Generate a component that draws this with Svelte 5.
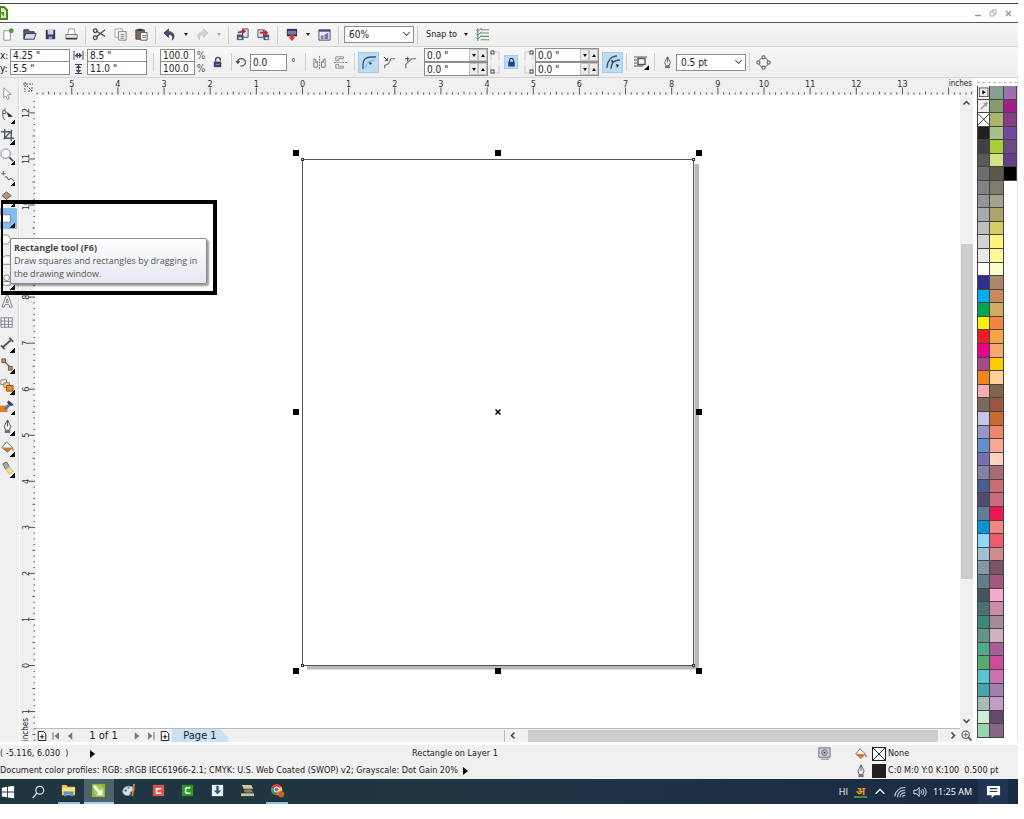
<script>
const INCH = 46.15
const VINCH = 46.05

let x = $state('4.25 "')
let y = $state('5.5 "')
let w = $state('8.5 "')
let h = $state('11.0 "')
let tool = $state('rect')

// ruler origin is the lower left corner of the page
const hTicks = []
for (let i = -46; i <= 116; i++) {
    hTicks.push({ pos: 267.5 + (i * INCH) / 8, i })
}
const vTicks = []
for (let i = -13; i <= 98; i++) {
    vTicks.push({ pos: 570.5 - (i * VINCH) / 8, i })
}
const tickLen = (i) => (i % 8 === 0 ? 7 : i % 4 === 0 ? 3 : 2)

const colors1 = '#231f20 #414042 #58595b #6d6e71 #808285 #939598 #a7a9ac #bcbec0 #d1d3d4 #e6e7e8 #ffffff #2e3192 #00aeef #00a651 #fff200 #ed1c24 #ec008c #a54a8c #f58220 #f7adaf #7c6a60 #c7c5e6 #9a95cb #6690cb #7470b3 #8480a8 #485f8f #504c70 #607d9b #0095da #8ed8f8 #a4bfd3 #8299aa #657d8a #47545e #4a7370 #3a8a78 #649488 #50a890 #56aa6c #58c5cf #46a5b0 #a6beb0 #cdebd5 #97d5ac'.split(' ')
const colors2 = '#859f93 #879a73 #a8b868 #a8c08a #a6ce39 #d4e388 #5b584a #7e7d6b #a3a48a #aca56a #d7cc68 #fff47a #fff79a #fffbce #a9876a #c98b5e #d0ab66 #f68345 #f7a446 #f9a771 #fecb00 #fdd09a #7d664c #9c563f #c96a33 #f1876a #f8a790 #fdd3c0 #a66c70 #cb6c70 #ca6a80 #ed1651 #f58580 #f0586f #cf8b8e #7c5268 #a4567f #f6aace #cd8bab #a38a9c #cfb0c2 #a75d96 #cc4b9b #c874ae #a081ab #c49acb #65496c #876589'.split(' ')
const colors3 = '#9e70b0 #a11f88 #893b88 #7548a0 #6c4a86 #673d8c #000000'.split(' ')

const icons = {
    new: '<path d="M3 4h6l1 2v8H3z" fill="#fff" stroke="#8a8f98"/><circle cx="11" cy="4" r="2.6" fill="#4b9a3c"/>',
    open: '<path d="M2 13V3h5l1 2h5v2" fill="#5a5f7d" stroke="#2e3154"/><path d="M2 13l2-6h11l-2 6z" fill="#d9dceb" stroke="#2e3154"/>',
    save: '<path d="M3 3h10v10H3z" fill="#34375f"/><path d="M5 3h6v5H5z" fill="#cfd3ea"/><path d="M6 10h4v3H6z" fill="#9aa0c4"/>',
    print: '<path d="M4 8l1-6h6l1 6" fill="#fff" stroke="#999"/><path d="M2 8h12v4H2z" fill="#e4e4e4" stroke="#777"/><path d="M2 12.5h12" stroke="#333" stroke-width="1.6"/>',
    cut: '<path d="M4 4l10 6M4 11l10-8" stroke="#555" stroke-width="1.5"/><circle cx="3.5" cy="4" r="2" fill="none" stroke="#444" stroke-width="1.3"/><circle cx="3.5" cy="11.5" r="2" fill="none" stroke="#444" stroke-width="1.3"/>',
    copy: '<path d="M2 2h8v9H2z" fill="#f4f4f4" stroke="#aaa"/><path d="M6 5h8v9H6z" fill="#fff" stroke="#777"/><path d="M8 8h4M8 10h4M8 12h4" stroke="#777"/>',
    paste: '<path d="M2 3h9v10H2z" fill="#7c6c58" stroke="#4f473e"/><path d="M4 2h5v2H4z" fill="#333"/><path d="M7 6h7v8H7z" fill="#fff" stroke="#555"/><path d="M9 9h4M9 11h4" stroke="#666"/>',
    undo: '<path d="M7 2L2 6.500 7 11V8c4 0 5 2 4 6 4-5 1-9-4-9z" fill="#454a66" stroke="#454a66"/>',
    redo: '<path d="M9 2l5 4.500L9 11V8c-4 0-5 2-4 6-4-5-1-9 4-9z" fill="#d2d2d2" stroke="#c4c4c4"/>',
    import: '<path d="M8 2h6v9H8z" fill="#dfe3f1" stroke="#4a4f75"/><path d="M2 8h7v6H2z" fill="#4d5178"/><path d="M4 11h3v2H4z" fill="#eee"/><path d="M3 6l6-1.500" stroke="#c0272d" stroke-width="2"/><path d="M8 1.500l4 3-4 3z" fill="#c0272d"/>',
    export: '<path d="M2 3h6v8H2z" fill="#dfe3f1" stroke="#4a4f75"/><path d="M8 8h6v6H8z" fill="#4d5178"/><path d="M10 11h3v2h-3z" fill="#eee"/><path d="M4 6h6" stroke="#c0272d" stroke-width="2"/><path d="M9 2l4 4-4 4z" fill="#c0272d"/>',
    launch: '<path d="M3 2h11v8H3z" fill="#30335c"/><path d="M4 4h9v4H4z" fill="#777ba3"/><path d="M7 8h3v3h2l-3.500 4L5 11h2z" fill="#d8342b"/>',
    welcome: '<path d="M2 3h12v11H2z" fill="#e9ecf7" stroke="#474c74"/><path d="M2 3h12v2H2z" fill="#474c74"/><path d="M4 9h3v4H4zM8 8l4-2v7H8z" fill="#747aa5"/>',
    options: '<path d="M6 3h9M6 6.500h9M6 10h9M6 13.500h9" stroke="#64946a" stroke-width="1.100"/><path d="M3 1v14M1 3l2 2 4-4M1 7l2 2 4-4M1 11l2 2 4-4" fill="none" stroke="#4c8558"/>',
    lock: '<path d="M6 7V5a2.500 2.500 0 0 1 5 0v1" fill="none" stroke="#3d4270" stroke-width="1.500"/><path d="M4 7h8v6H4z" fill="#3d4270"/><path d="M6 10h4" stroke="#8f94b8"/>',
    locked: '<path d="M5.500 8V5.500a2.500 2.500 0 0 1 5 0V8" fill="none" stroke="#27417a" stroke-width="1.500"/><path d="M4 7h8v6H4z" fill="#27417a"/>',
    rotate: '<path d="M3 7a5 4.500 0 1 1 3.500 5" fill="none" stroke="#484c66" stroke-width="1.500"/><path d="M0.500 6h6l-3 4z" fill="#484c66"/>',
    mirrorH: '<path d="M2 13V4l2 1v3l2-1v6zM14 13V4l-2 1v3l-2-1v6z" fill="none" stroke="#74757d"/><path d="M8 1v14" stroke="#74757d" stroke-dasharray="2 1"/>',
    mirrorV: '<path d="M3 2h8v2H6v2H3zM3 14h8v-2H6v-2H3z" fill="none" stroke="#85868d"/><path d="M1 8h14" stroke="#74757d" stroke-dasharray="2 1"/>',
    round: '<path d="M2 15V11C2 6 5 3 10 3h5" fill="none" stroke="#3c5573" stroke-width="1.300"/><path d="M5 14c0-5 3-8 9-8" fill="none" stroke="#8aa9c7"/><path d="M8 8l3 1-2 2z" fill="#222"/>',
    scallop: '<path d="M3 14v-3c3 0 6-3 6-7h5" fill="none" stroke="#6a6c78" stroke-width="1.200"/><path d="M2 2l4 4M3 6h3V3" stroke="#444" fill="none"/>',
    chamfer: '<path d="M3 14v-4l6-6h5" fill="none" stroke="#6a6c78" stroke-width="1.200"/><path d="M2 4h5M5 2v5" stroke="#444" fill="none"/>',
    relative: '<path d="M2 14C2 7 6 2 12 2M6 15c0-6 3-9 9-9" fill="none" stroke="#3c5573" stroke-width="1.300"/><path d="M6 6l3 1-2 2zM11 10l3 1-2 3z" fill="#222"/>',
    wrap: '<path d="M1 3h13M1 6h3M1 9h3M1 12h9" stroke="#555"/><path d="M5 4.500h7v6H5z" fill="#fff" stroke="#555" stroke-width="1.400"/><path d="M16 11v5h-5z" fill="#000"/>',
    pen: '<path d="M8 1l3.500 7-1.500 4H6L4.500 8z" fill="#eee" stroke="#50525d"/><path d="M8 2v6" stroke="#50525d"/><path d="M5 12h6v3H5z" fill="#6f7385"/>',
    convert: '<circle cx="8" cy="8" r="5" fill="none" stroke="#555"/><path d="M6.500 1h3v3h-3zM6.500 12h3v3h-3zM1 6.500h3v3H1zM12 6.500h3v3h-3z" fill="#fff" stroke="#555"/>',
    pick: '<path d="M4 2l8 7-4 .5 2 4-2 1-2-4-2 2z" fill="#fff" stroke="#8c8c96"/>',
    shape: '<path d="M6 1C2 5 2 9 5 14" fill="none" stroke="#555"/><path d="M3 4h3v3H3z" fill="#fff" stroke="#555"/><path d="M7 5l7 5-5 1z" fill="#333"/>',
    crop: '<path d="M5 1v10h10M1 4h11v10M13 2L4 12" fill="none" stroke="#555a68" stroke-width="1.500"/>',
    zoom: '<circle cx="6" cy="6" r="5" fill="#f5f8fc" stroke="#999ca8" stroke-width="1.300"/><path d="M10 10l4 4" stroke="#555" stroke-width="2"/>',
    freehand: '<path d="M1 5h5M3.500 2v5M5 9c3-3 3 4 5 2s2-1 5 2" fill="none" stroke="#666a78" stroke-width="1.100"/>',
    smart: '<path d="M2 6l5-4 5 4-5 4z" fill="#b29674" stroke="#765f4c"/><path d="M8 11h6v3H8z" fill="#b29674"/>',
    rect: '<path d="M-1 4h12v8H-1z" fill="#fff" stroke="#7a8899"/>',
    ellipse: '<circle cx="6" cy="8" r="5" fill="#fff" stroke="#888"/>',
    poly: '<path d="M2 5l4-2h5v9H2z" fill="#fff" stroke="#888"/>',
    basic: '<circle cx="7" cy="5" r="3" fill="#fff" stroke="#777"/><path d="M3 9h8v4H3z" fill="#fff" stroke="#777"/>',
    text: '<path d="M2 14L6.500 2h2.500L13 14h-2.500L9.500 11H5.500l-1 3zM6.200 9h2.800L7.700 5z" fill="#fff" stroke="#777c88"/>',
    table: '<path d="M1 3h12v10H1zM5 3v10M9 3v10M1 6.500h12M1 10h12" fill="#fff" stroke="#777c8c"/>',
    dim: '<path d="M3 12L12 4" stroke="#555" stroke-width="2"/><path d="M1 10l4 4M10 2l4 4" stroke="#555" stroke-width="2"/>',
    connector: '<path d="M2 2h4v4H2zM9 10h4v4H9z" fill="#c88e64" stroke="#74533f"/><path d="M5 5l6 6" stroke="#8d624d" stroke-width="1.500"/>',
    blend: '<path d="M1 2h6v5H1z" fill="#fff" stroke="#777"/><path d="M4 5h6v5H4z" fill="#f9c77f" stroke="#a87a38"/><path d="M7 8h7v6H7z" fill="#f18a21" stroke="#8b5019"/>',
    eye: '<path d="M0 7h8v7H0z" fill="#e57e22"/><path d="M5 11l6-6" stroke="#60769b" stroke-width="3"/><path d="M9 2l5 4-2 1-4-3z" fill="#303b5d" stroke="#303b5d"/>',
    fill: '<path d="M2 8l5-6 6 6-5 5z" fill="#fff" stroke="#575b69"/><path d="M3 8h10l-5 5z" fill="#d8771f"/><path d="M13 8c3 2 1 5 0 3" fill="#bd631c"/>',
    interactive: '<path d="M3 3l4-2 3 5-4 3z" fill="#aaa" stroke="#646871"/><path d="M6 9l4-3 4 5-4 3z" fill="#f1dc8d" stroke="#cbb56d"/>',
    addPage: '<path d="M3 2h7l3 3v9H3z" fill="#fff" stroke="#222" stroke-width="1.300"/><path d="M5 9h6M8 6v6" stroke="#222" stroke-width="1.400"/>',
    first: '<path d="M4 3v10" stroke="#777" stroke-width="1.500"/><path d="M12 3v10L6 8z" fill="#777"/>',
    prev: '<path d="M11 3v10L5 8z" fill="#777"/>',
    next: '<path d="M5 3v10l6-5z" fill="#777"/>',
    last: '<path d="M12 3v10" stroke="#777" stroke-width="1.500"/><path d="M4 3v10l6-5z" fill="#777"/>',
    nav: '<circle cx="7" cy="7" r="4.500" fill="#eee" stroke="#555" stroke-width="1.300"/><path d="M4.500 7h5M7 4.500v5" stroke="#555"/><path d="M10 10l4 4" stroke="#555" stroke-width="2"/>',
    proof: '<path d="M2 2h12v10H2z" fill="#cbd0e2" stroke="#666b89"/><circle cx="8" cy="7" r="3" fill="#e9b6b2" stroke="#555a78"/><circle cx="8" cy="7" r="1" fill="#333"/><path d="M4 14h9" stroke="#777"/>',
    windows: '<path d="M1 3l6-1v5.500H1zM8 1.800L15 1v6.500H8zM1 8.500h6V14l-6-1zM8 8.500h7V15l-7-.8z" fill="#fff"/>',
    search: '<circle cx="10" cy="6" r="4.500" fill="none" stroke="#e6edf0" stroke-width="1.300"/><path d="M7 9l-5 6" stroke="#e6edf0" stroke-width="1.500"/>',
    folder: '<path d="M1 2h5l1 2h8v9H1z" fill="#f2c14c"/><path d="M1 5h14v4H1z" fill="#fbe08f"/><path d="M3 14V9h10v5h-3v-2H6v2z" fill="#5197c8"/>',
    corel: '<path d="M1 1h14v14H1z" fill="#8ab53d"/><path d="M3 2h7l4 4v8H6l-3-3z" fill="#a9cf5b"/><path d="M3 3l6 7" stroke="#fff" stroke-width="2.500"/><path d="M12 6v7H6z" fill="#fff"/>',
    paint: '<path d="M2 8c1-6 11-6 12-1 0 3-5 1-4 4 0 4-9 3-8-3z" fill="#d7dfe5" stroke="#8fa7b5"/><circle cx="5" cy="8" r="1.300" fill="#2d80b8"/><circle cx="8" cy="5" r="1.200" fill="#4ba557"/><path d="M14 1l-2 13" stroke="#c9853e" stroke-width="2"/>',
    camRed: '<path d="M2 2h12v12H2z" fill="#e4524c"/><path d="M11 6H6v5h5" fill="none" stroke="#fff" stroke-width="1.600"/>',
    camGreen: '<path d="M2 2h12v12H2z" fill="#2c9b22"/><path d="M11 5H7L6 6v4l1 1h4" fill="none" stroke="#fff" stroke-width="1.600"/>',
    download: '<path d="M2 2h12v12H2z" fill="#e9f1f8"/><path d="M8 3v6" stroke="#29557f" stroke-width="2.500"/><path d="M4 8h8l-4 4z" fill="#29557f"/>',
    scanner: '<path d="M2 2h10l2 4H4z" fill="#d6c995"/><path d="M4 7h8l2 3H5z" fill="#8d8362"/><path d="M1 11h14v3H1z" fill="#c8bf9e"/>',
    chrome: '<circle cx="7" cy="7" r="6" fill="#e34133"/><path d="M2 4l5 9A6 6 0 0 1 2 4z" fill="#2da44e"/><path d="M12.500 4.500H7l3 4-3 4.500a6 6 0 0 0 5.500-8.500z" fill="#f8c62d"/><circle cx="7" cy="7" r="2.600" fill="#4285f4" stroke="#fff"/><circle cx="12" cy="12" r="3.300" fill="#c75b35"/>',
    up: '<path d="M3 10l5-5 5 5" fill="none" stroke="#fff" stroke-width="1.400"/>',
    wifi: '<path d="M2 13A11 11 0 0 1 14 3M5 14a8 8 0 0 1 9-8M8 14a5 5 0 0 1 6-5M11 14a2 2 0 0 1 3-2" fill="none" stroke="#cbd2dc" stroke-width="1.200"/>',
    sound: '<path d="M1 6h3l3-3v10l-3-3H1z" fill="none" stroke="#fff"/><path d="M9 6q2 2 0 4M11 4.500q3 3.500 0 7M13 3q4 5 0 10" fill="none" stroke="#dbe2ea" stroke-width="1.100"/>',
    note: '<path d="M1 2h14v10H9l-3 3v-3H1z" fill="#fff"/><path d="M4 5h8M4 8h8" stroke="#263756" stroke-width="1.300"/>',
}

const tools = ['pick', 'shape', 'crop', 'zoom', 'freehand', 'smart', 'rect', 'ellipse', 'poly', 'basic', 'text', 'table', 'dim', 'connector', 'blend', 'eye', 'pen', 'fill', 'interactive']
const noFlyout = ['pick', 'ellipse', 'poly', 'text', 'table']
const apps = ['folder', 'corel', 'paint', 'camRed', 'camGreen', 'download', 'scanner', 'chrome']
const handles = [[261, 58], [463, 58], [664, 58], [261, 317], [664, 317], [261, 576], [463, 576], [664, 576]]
</script>

{#snippet icon(name, size = 15)}
    <svg class="icon" width={size} height={size} viewBox="0 0 16 16" aria-hidden="true">{@html icons[name]}</svg>
{/snippet}

{#snippet btn(name)}
    <button class="tb" aria-label={name}>{@render icon(name)}</button>
{/snippet}

{#snippet caret(off)}
    <button class="caret" class:off aria-label="More"><i></i></button>
{/snippet}

{#snippet corners(right)}
    <div class="corners">
        {#each [0, 1] as n}
            <svg width="10" height="11" viewBox="0 0 10 11">
                <path d={n ? 'M1 1v8h8V1' : 'M1 10V2h8v8'} fill="none" stroke="#c9c9c9" />
                <rect x={right ? 6 : 1} y={n ? 6 : 1} width="3" height="3" fill="#fff" stroke="#444" />
            </svg>
        {/each}
    </div>
{/snippet}

{#snippet spinPair(name)}
    <div class="pair spin">
        {#each ['top', 'bottom'] as row}
            <div class="spinrow">
                <input aria-label="{name} {row}" value={'0.0 "'} />
                <button aria-label="Decrease"><i></i></button>
                <button aria-label="Increase"><i class="upward"></i></button>
            </div>
        {/each}
    </div>
{/snippet}

<div class="app">
    <header class="title">
        <svg width="8" height="14" viewBox="0 0 8 14"><path d="M0 1h4l3 3v9H0z" fill="#dcebbb" stroke="#4d8522" stroke-width="2" /><path d="M0 6l4 5V6z" fill="#5b952c" /></svg>
        <div class="winbtns">
            <button aria-label="Minimize"><svg width="9" height="9"><path d="M1 6.500h6" stroke="#999" stroke-width="1.500" /></svg></button>
            <button aria-label="Restore"><svg width="9" height="9"><path d="M1 3h4v4H1zM3 3V1h4v4H5" fill="none" stroke="#aaa" /></svg></button>
            <button aria-label="Close"><svg width="9" height="9"><path d="M2 2l5 5M7 2L2 7" stroke="#999" stroke-width="1.500" /></svg></button>
        </div>
    </header>

    <div class="bar standard">
        {@render btn('new')}{@render btn('open')}{@render btn('save')}{@render btn('print')}
        <span class="sep"></span>
        {@render btn('cut')}{@render btn('copy')}{@render btn('paste')}
        <span class="sep"></span>
        {@render btn('undo')}{@render caret()}{@render btn('redo')}{@render caret(true)}
        <span class="sep"></span>
        {@render btn('import')}{@render btn('export')}
        <span class="sep"></span>
        {@render btn('launch')}{@render caret()}{@render btn('welcome')}
        <span class="sep wide"></span>
        <div class="combo"><select aria-label="Zoom level"><option>60%</option></select></div>
        <span class="sep wide"></span>
        <button class="snap">Snap to</button>{@render caret()}
        {@render btn('options')}
    </div>

    <div class="bar property">
        <div class="labels"><label for="px">x:</label><label for="py">y:</label></div>
        <div class="pair pos"><input id="px" bind:value={x} /><input id="py" bind:value={y} /></div>
        <div class="sizes">
            <svg width="11" height="9"><path d="M1 0v9M10 0v9M2 4.500h7" stroke="#444862" /><path d="M2 4.500l3-3v6zM9 4.500l-3-3v6z" fill="#444862" /></svg>
            <svg width="11" height="10"><path d="M2 .5h7M2 9.500h7M5.500 1v8" stroke="#444862" /><path d="M5.500 1l3 3h-6zM5.500 9l3-3h-6z" fill="#444862" /></svg>
        </div>
        <div class="pair pos"><input aria-label="Width" bind:value={w} /><input aria-label="Height" bind:value={h} /></div>
        <span class="sep wide"></span>
        <div class="pair scale"><input aria-label="Scale X" value="100.0" /><input aria-label="Scale Y" value="100.0" /></div>
        <div class="labels pct"><span>%</span><span>%</span></div>
        {@render btn('lock')}
        <span class="sep"></span>
        {@render icon('rotate', 13)}
        <input class="angle" aria-label="Angle of rotation" value="0.0" />
        <span class="deg">°</span>
        <span class="sep"></span>
        {@render btn('mirrorH')}{@render btn('mirrorV')}
        <span class="sep"></span>
        <button class="tb on" aria-label="Round corner">{@render icon('round', 16)}</button>
        {@render btn('scallop')}{@render btn('chamfer')}
        {@render spinPair('Left corner radius')}
        {@render corners(false)}
        <button class="tb small on" aria-label="Edit corners together">{@render icon('locked', 13)}</button>
        {@render corners(true)}
        {@render spinPair('Right corner radius')}
        <button class="tb on gap" aria-label="Relative corner scaling">{@render icon('relative', 16)}</button>
        <span class="sep"></span>
        <button class="tb" aria-label="Wrap text">{@render icon('wrap', 16)}</button>
        <span class="sep"></span>
        <span class="nib">{@render icon('pen', 13)}</span>
        <div class="combo"><select aria-label="Outline width"><option>0.5 pt</option></select></div>
        <span class="sep"></span>
        {@render btn('convert')}
    </div>

    <main>
        <nav class="toolbox" aria-label="Toolbox">
            {#each tools as t}
                <button class:active={tool === t} aria-label={t} onclick={() => (tool = t)}>
                    {@render icon(t)}
                    {#if !noFlyout.includes(t)}<i></i>{/if}
                </button>
            {/each}
        </nav>

        <div class="origin">
            <svg width="10" height="10"><path d="M2 0v10M0 2h10M4 4l5 5M9 5v4H5" fill="none" stroke="#555" stroke-dasharray="2 1" /></svg>
        </div>
        <div class="hruler">
            <svg width="100%" height="17">
                {#each hTicks as t}
                    <path d="M{t.pos} {16.5 - tickLen(t.i)}V16.500" stroke="#555" />
                    {#if t.i % 8 === 0 && t.i < 112}<text x={t.pos} y="9" text-anchor="middle">{Math.abs(t.i / 8)}</text>{/if}
                {/each}
            </svg>
            <span class="unit">inches</span>
        </div>
        <div class="vruler">
            <svg width="16" height="100%">
                {#each vTicks as t}
                    <path d="M{15.5 - tickLen(t.i)} {t.pos}H15.500" stroke="#555" />
                    {#if t.i % 8 === 0}<text transform="translate(9 {t.pos}) rotate(-90)" text-anchor="middle">{Math.abs(t.i / 8)}</text>{/if}
                {/each}
            </svg>
            <span class="unit">inches</span>
        </div>

        <div class="canvas">
            <svg width="100%" height="100%">
                <path d="M659.500 69H664V574.500H272V571H659.500z" fill="#b9b9b9" />
                <rect x="267.500" y="64.500" width="391" height="506" fill="#fff" stroke="#555" />
                {#each [[267, 64], [658, 64], [267, 570], [658, 570]] as [cx, cy]}
                    <rect x={cx - 0.5} y={cy - 0.5} width="2" height="2" fill="#fff" stroke="#333" />
                {/each}
                {#each handles as [hx, hy]}
                    <rect x={hx - 3} y={hy - 3} width="6" height="6" />
                {/each}
                <path d="M460.500 314.500l5 5M465.500 314.500l-5 5" stroke="#000" stroke-width="1.500" />
            </svg>
        </div>

        <div class="vscroll">
            <svg width="9" height="7"><path d="M1.500 5.500l3-3 3 3" fill="none" stroke="#444" stroke-width="1.500" /></svg>
            <div class="track"><div class="thumb"></div></div>
            <svg width="9" height="7"><path d="M1.500 1.500l3 3 3-3" fill="none" stroke="#444" stroke-width="1.500" /></svg>
        </div>

        <div class="pagebar">
            <button aria-label="Add page before">{@render icon('addPage', 12)}</button>
            <button aria-label="First page">{@render icon('first', 12)}</button>
            <button aria-label="Previous page">{@render icon('prev', 12)}</button>
            <span class="count">1 of 1</span>
            <button aria-label="Next page">{@render icon('next', 12)}</button>
            <button aria-label="Last page">{@render icon('last', 12)}</button>
            <button aria-label="Add page after">{@render icon('addPage', 12)}</button>
            <button class="tab">Page 1</button>
            <div class="hscroll">
                <svg width="7" height="9"><path d="M5.500 1.500l-3 3 3 3" fill="none" stroke="#444" stroke-width="1.500" /></svg>
                <div class="thumb"></div>
                <svg width="7" height="9"><path d="M1.500 1.500l3 3-3 3" fill="none" stroke="#444" stroke-width="1.500" /></svg>
            </div>
        </div>
        <button class="navigator" aria-label="Navigator">{@render icon('nav', 13)}</button>

        <aside class="palette">
            <div class="grip"></div>
            <div class="cols">
                <div class="col">
                    <button class="menu" aria-label="Palette menu"><svg width="100%" height="100%" viewBox="0 0 13 13"><rect x="1.500" y="1.500" width="10" height="10" fill="#eee" stroke="#444" /><path d="M5 4l4 2.500L5 9z" /></svg></button>
                    <button aria-label="Pick color" style="background: #eee"><svg width="100%" height="100%" viewBox="0 0 13 13"><path d="M3 10l5-5" stroke="#aaa" stroke-width="2" /><path d="M7 3l3 3M8 5l3-3" stroke="#999" stroke-width="2" /></svg></button>
                    <button aria-label="No color" style="background: #fff"><svg width="100%" height="100%" viewBox="0 0 13 13"><path d="M0 0l13 13M13 0L0 13" stroke="#222" /></svg></button>
                    {#each colors1 as c}<button aria-label={c} style="background: {c}"></button>{/each}
                </div>
                <div class="col">
                    {#each colors2 as c}<button aria-label={c} style="background: {c}"></button>{/each}
                </div>
                <div class="col">
                    {#each colors3 as c}<button aria-label={c} style="background: {c}"></button>{/each}
                </div>
            </div>
        </aside>

        <div class="callout">
            <div class="tooltip" role="tooltip">
                <strong>Rectangle tool (F6)</strong>
                <p>Draw squares and rectangles by dragging in the drawing window.</p>
            </div>
        </div>
    </main>

    <footer class="status">
        <div class="info">
            <div class="line">
                <span class="coords">( -5.116, 6.030&nbsp; )</span><i class="play"></i>
                <span class="object">Rectangle on Layer 1</span>
                {@render icon('proof')}
            </div>
            <div class="line">
                <span class="profiles">Document color profiles: RGB: sRGB IEC61966-2.1; CMYK: U.S. Web Coated (SWOP) v2; Grayscale: Dot Gain 20%</span><i class="play"></i>
            </div>
        </div>
        <div class="style">
            <div class="line">
                {@render icon('fill', 14)}
                <svg class="chip" width="14" height="14"><rect x=".5" y=".5" width="13" height="13" fill="#fff" stroke="#222" /><path d="M1 1l12 12M13 1L1 13" stroke="#222" /></svg>
                <span>None</span>
            </div>
            <div class="line">
                {@render icon('pen', 14)}
                <svg class="chip" width="14" height="14"><rect width="14" height="14" fill="#231f20" /></svg>
                <span>C:0 M:0 Y:0 K:100&nbsp; 0.500 pt</span>
            </div>
        </div>
    </footer>

    <div class="taskbar">
        <button class="sys" aria-label="Start">{@render icon('windows', 14)}</button>
        <button class="sys" aria-label="Search">{@render icon('search', 14)}</button>
        <div class="apps">
            {#each apps as a}
                <button class:current={a === 'corel'} class:open={a === 'folder' || a === 'chrome'} aria-label={a}>{@render icon(a)}</button>
            {/each}
        </div>
        <div class="tray">
            <span class="lang">HI</span>
            <span class="ime">अ</span>
            {@render icon('up', 14)}
            {@render icon('wifi', 14)}
            {@render icon('sound', 14)}
            <time>11:25 AM</time>
            <button class="notes" aria-label="Notifications">{@render icon('note', 15)}</button>
        </div>
    </div>
</div>

<style>
:global(body) {
    margin: 0;
    background: #fff;
}

.app {
    box-sizing: border-box;
    display: flex;
    flex-direction: column;
    min-height: calc(100vh - 15px);
    margin-right: 6px;
    padding-top: 3px;
    overflow: hidden;
    font-family: "DejaVu Sans Condensed", "DejaVu Sans", "Noto Sans", sans-serif;
    font-size: 10px;
    line-height: 13px;
    color: #222;
}

button {
    display: flex;
    align-items: center;
    justify-content: center;
    padding: 0;
    border: 0;
    background: none;
    font: inherit;
    color: inherit;
}

input,
select {
    box-sizing: border-box;
    min-width: 0;
    margin: 0;
    padding: 0 2px;
    border: 1px solid #8d8d8d;
    border-radius: 0;
    background: #fff;
    font: inherit;
    color: #222;
}

svg {
    display: block;
    flex: none;
}

.title {
    display: flex;
    align-items: center;
    justify-content: space-between;
    height: 18px;
    border-top: 1px solid #444;
    border-bottom: 1px solid #555;
}

.winbtns {
    display: flex;
    gap: 6px;
    margin-right: 5px;
}

.bar {
    display: flex;
    align-items: center;
    background: linear-gradient(#f7f7f7, #eee);
    border-bottom: 1px solid #d5d5d5;
    white-space: nowrap;
}

.bar > * {
    flex: none;
}

.standard {
    height: 23px;
}

.standard > :first-child {
    margin-left: -2px;
}

.property {
    height: 30px;
}

.tb {
    width: 21px;
    height: 21px;
}

.tb.on {
    background: #bcdcf4;
    box-shadow: inset 0 0 0 1px #a5cbe8;
}

.tb.small {
    width: 14px;
    height: 14px;
    margin: 0 4px;
}

.tb.gap {
    margin-left: 3px;
}

.sep {
    width: 1px;
    height: 18px;
    margin: 0 3px;
    background: #d0d0d0;
}

.sep.wide {
    margin: 0 6px;
}

.standard .sep.wide {
    margin: 0 5px 0 3px;
}

.caret {
    width: 12px;
    height: 18px;
}

.caret i {
    border: 2px solid transparent;
    border-top: 3px solid #222;
    border-bottom: 0;
}

.caret.off i {
    border-top-color: #aaa;
}

.combo {
    width: 70px;
    position: relative;
}

.combo select {
    appearance: none;
    width: 100%;
    height: 17px;
    padding-left: 4px;
    background: #fff;
}

.combo::after {
    content: "";
    position: absolute;
    right: 5px;
    top: 4px;
    width: 4px;
    height: 4px;
    border: solid #555;
    border-width: 0 1px 1px 0;
    transform: rotate(45deg);
}

.snap {
    margin: 0 3px;
    font-size: 9px;
}

.labels {
    display: flex;
    flex-direction: column;
    width: 10px;
}

.pct {
    width: 12px;
    align-items: center;
    color: #555;
}

.pair {
    display: flex;
    flex-direction: column;
}

.pair input {
    width: 100%;
    height: 13px;
    line-height: 11px;
}

.pair > * + * {
    border-top: 0;
}

.pos {
    width: 60px;
}

.scale {
    width: 35px;
}

.sizes {
    display: flex;
    flex-direction: column;
    gap: 4px;
    margin: 0 3px;
}

.angle {
    width: 37px;
    height: 17px;
    margin-left: 2px;
}

.deg {
    width: 11px;
    margin-left: 4px;
}

.spin {
    width: 64px;
    margin-left: 3px;
}

.spinrow {
    display: flex;
    border: 1px solid #8d8d8d;
}

.spinrow input {
    flex: 1;
    height: 12px;
    border: 0;
}

.spinrow button {
    width: 9px;
    background: #ececec;
    box-shadow: inset 0 0 0 1px #c4c4c4;
}

.spinrow i {
    border: 2px solid transparent;
    border-top: 3px solid #111;
    border-bottom: 0;
}

.spinrow i.upward {
    border-top: 0;
    border-bottom: 3px solid #111;
}

.corners {
    display: flex;
    flex-direction: column;
    gap: 3px;
    margin-left: 2px;
}

.corners + .spin {
    margin-left: 1px;
}

.nib {
    width: 15px;
    margin-left: 3px;
}

main {
    position: relative;
    flex: 1;
    display: grid;
    grid-template-columns: 19px 16px minmax(0, 1fr) 13px 45px;
    grid-template-rows: 17px minmax(0, 1fr) 14px;
    background: #f0f0f0;
    border-bottom: 3px solid #fff;
}

.toolbox {
    grid-row: 1 / 4;
    box-sizing: border-box;
    display: grid;
    grid-template-rows: repeat(19, 1fr);
    align-self: start;
    height: 401px;
    padding-top: 5px;
    border-right: 1px solid #ddd;
}

.toolbox button {
    position: relative;
    justify-content: flex-start;
}

.toolbox .active {
    background: #82bdec;
    margin-right: 1px;
}

.toolbox i {
    position: absolute;
    left: 10px;
    bottom: 1px;
    width: 5px;
    height: 5px;
    background: linear-gradient(135deg, transparent 50%, #111 50%);
}

.origin {
    display: flex;
    align-items: center;
    justify-content: center;
    border-left: 1px solid #fff;
}

.hruler {
    grid-column: 3 / 5;
    position: relative;
    overflow: hidden;
}

.vruler {
    grid-column: 2;
    grid-row: 2 / 4;
    position: relative;
    overflow: hidden;
    border-left: 1px solid #fff;
    margin-right: -1px;
}

.vruler svg {
    position: absolute;
}

.hruler text,
.vruler text {
    font-size: 9px;
    fill: #333;
}

.unit {
    position: absolute;
    right: 1px;
    top: 1px;
    font-size: 8px;
    line-height: 10px;
    background: #f0f0f0;
}

.vruler .unit {
    right: auto;
    left: 1px;
    top: auto;
    bottom: 1px;
    writing-mode: vertical-rl;
    transform: rotate(180deg);
}

.canvas {
    grid-column: 3;
    grid-row: 2;
    overflow: hidden;
    background: #fff;
    position: relative;
}

.canvas svg {
    position: absolute;
}

.vscroll {
    grid-column: 4;
    grid-row: 2;
    display: flex;
    flex-direction: column;
    align-items: center;
    padding: 4px 0 3px;
    background: #f0f0f0;
}

.track {
    flex: 1;
    width: 12px;
    display: flex;
    flex-direction: column;
}

.track::before {
    content: "";
    flex: 138;
}

.track::after {
    content: "";
    flex: 139;
}

.thumb {
    background: #cdcdcd;
}

.track .thumb {
    flex: 336;
}

.pagebar {
    grid-column: 3;
    grid-row: 3;
    display: flex;
    align-items: center;
    border-top: 1px solid #bbb;
    box-sizing: border-box;
    font-size: 11px;
}

.pagebar button {
    width: 14px;
}

.pagebar .count {
    width: 53px;
    text-align: center;
}

.pagebar .tab {
    width: 56px;
    height: 13px;
    background: #c9e2f6;
    clip-path: polygon(0 0, 48px 0, 100% 8px, 100% 100%, 0 100%);
}

.hscroll {
    flex: 1;
    display: flex;
    align-items: center;
    gap: 12px;
    margin-left: 276px;
    padding: 0 3px 0 4px;
    border-left: 1px solid #bbb;
}

.hscroll .thumb {
    flex: 1;
    height: 12px;
}

.navigator {
    grid-column: 4;
    grid-row: 3;
}

.palette {
    grid-column: 5;
    grid-row: 1 / 4;
    display: flex;
    flex-direction: column;
    padding: 4px 0 4px 4px;
    background: #fff;
    border-right: 1px solid #e4e4e4;
}

.grip {
    height: 3px;
    border-top: 1px dashed #bbb;
}

.cols {
    flex: 1;
    display: grid;
    grid-template-columns: repeat(3, 1fr);
}

.col {
    display: grid;
    grid-template-rows: repeat(48, 1fr);
}

.col button {
    min-height: 0;
    overflow: hidden;
    border: solid #444;
    border-width: 0 1px 1px 0;
}

.col:first-child button {
    border-left-width: 1px;
}

.callout {
    position: absolute;
    left: 1px;
    top: 122px;
    width: 210px;
    height: 87px;
    border: 4px solid #000;
    border-left-width: 2px;
}

.tooltip {
    position: absolute;
    left: 7px;
    top: 34px;
    box-sizing: border-box;
    width: 197px;
    padding: 2px 3px 3px;
    border: 1px solid #888;
    border-radius: 2px;
    background: linear-gradient(#fff, #e6e7f1);
    box-shadow: 2px 2px 2px rgba(0, 0, 0, 0.4);
    font-family: "Open Sans", "Noto Sans", sans-serif;
    font-size: 9px;
    line-height: 13px;
    color: #555;
}

.tooltip strong {
    color: #444;
}

.tooltip p {
    margin: 0;
}

.status {
    display: flex;
    height: 34px;
    background: #f0f0f0;
    font-size: 9px;
    white-space: nowrap;
}

.info {
    flex: 1;
    min-width: 0;
}

.style {
    width: 164px;
}

.line {
    display: flex;
    align-items: center;
    height: 17px;
}

.coords {
    width: 90px;
}

.object {
    flex: 1;
    margin-left: 317px;
}

.info .line > :global(svg) {
    margin-right: 22px;
}

.profiles {
    margin-right: 5px;
}

.play {
    border: solid transparent;
    border-width: 4px 0 4px 5px;
    border-left-color: #000;
}

.chip {
    margin: 0 2px 0 4px;
}

.taskbar {
    display: flex;
    height: 25px;
    background: linear-gradient(90deg, #20363f, #1f3644 50%, #1b2a45);
    color: #fff;
}

.sys {
    width: 30px;
}

.sys:first-child {
    margin-left: -7px;
}

.apps {
    display: grid;
    grid-template-columns: repeat(8, 1fr);
    width: 238px;
    margin-left: 1px;
}

.apps button {
    border-bottom: 2px solid transparent;
}

.apps .open {
    margin: 0 4px;
    border-color: #8fc1e5;
}

.apps .current {
    background: #4d6468;
    border-color: #a5d0ee;
}

.tray {
    display: flex;
    align-items: center;
    gap: 6px;
    margin-left: auto;
    font-family: "Open Sans", "Noto Sans", sans-serif;
    font-size: 9px;
}

.ime {
    width: 13px;
    border-bottom: 2px solid #4a8e35;
    font-size: 11px;
    font-weight: bold;
    color: #f0941f;
    line-height: 11px;
    text-align: center;
}

.notes {
    width: 30px;
    height: 25px;
    margin-right: 10px;
    background: #223453;
}
</style>
